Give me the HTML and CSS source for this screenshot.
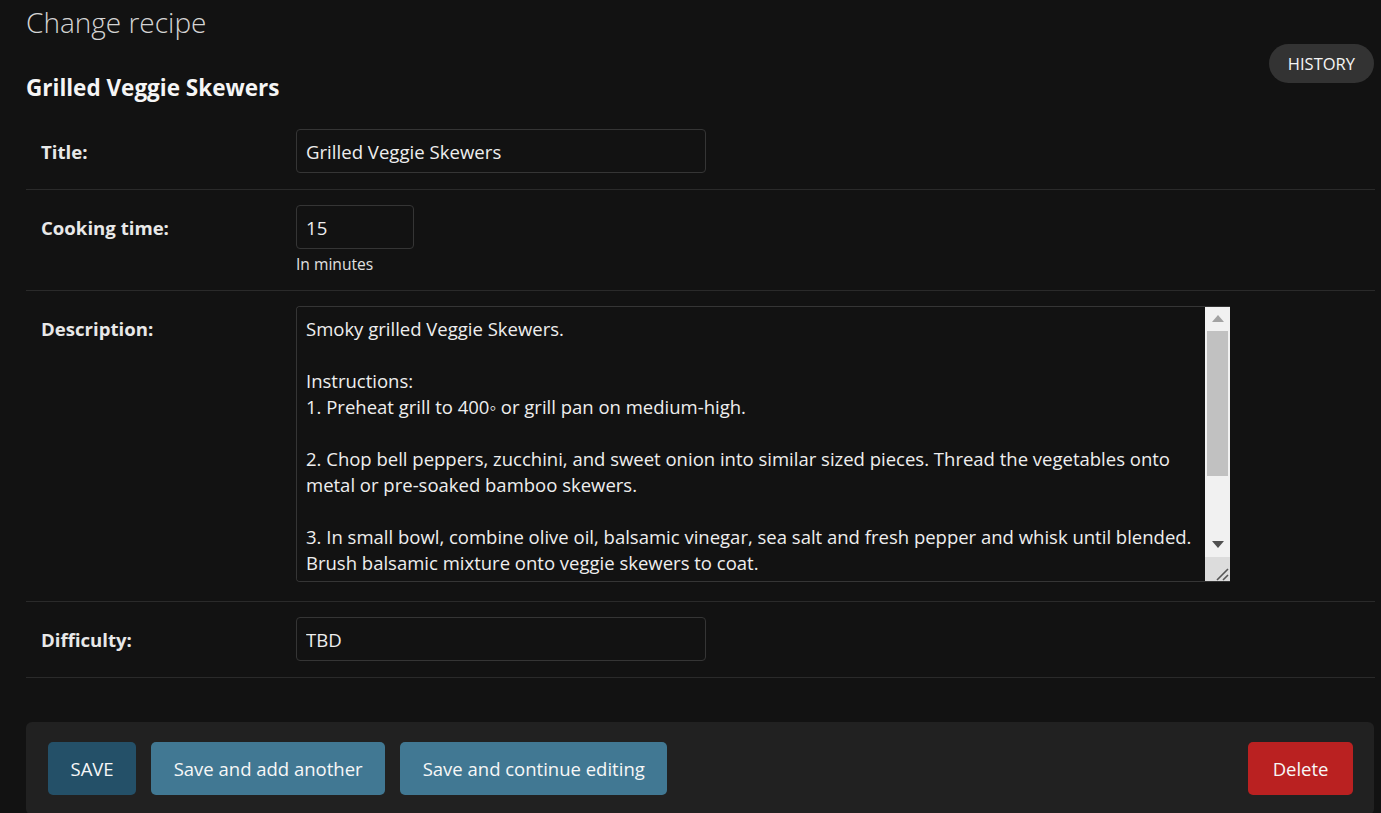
FILE: index.html
```html
<!DOCTYPE html>
<html lang="en">
<head>
<meta charset="utf-8">
<title>Change recipe</title>
<link rel="stylesheet" href="styles.css">
</head>
<body>
<div class="content">
  <h1 class="page-title">Change recipe</h1>
  <div class="titlebar">
    <h2 class="object-name">Grilled Veggie Skewers</h2>
    <a class="history-link" href="#">HISTORY</a>
  </div>
  <form class="change-form">
    <fieldset class="module">
      <div class="form-row">
        <label class="field-label" for="id_title">Title:</label>
        <div class="field-box">
          <input class="text-input wide" id="id_title" type="text" value="Grilled Veggie Skewers">
        </div>
      </div>
      <div class="form-row">
        <label class="field-label" for="id_cooking_time">Cooking time:</label>
        <div class="field-box">
          <input class="text-input narrow" id="id_cooking_time" type="text" value="15">
          <div class="help">In minutes</div>
        </div>
      </div>
      <div class="form-row row-textarea">
        <label class="field-label" for="id_description">Description:</label>
        <div class="field-box">
          <div class="textarea-wrap">
            <textarea class="textarea" id="id_description" rows="10">Smoky grilled Veggie Skewers.

Instructions:
1. Preheat grill to 400◦ or grill pan on medium-high.

2. Chop bell peppers, zucchini, and sweet onion into similar sized pieces. Thread the vegetables onto metal or pre-soaked bamboo skewers.

3. In small bowl, combine olive oil, balsamic vinegar, sea salt and fresh pepper and whisk until blended. Brush balsamic mixture onto veggie skewers to coat.

4. Grill skewers, turning occasionally, until vegetables are tender and lightly charred, about 10-15 minutes.

5. Serve warm.</textarea>
            <div class="scrollbar" aria-hidden="true">
              <div class="sb-btn">
                <svg width="12" height="7" viewBox="0 0 12 7"><polygon points="0,7 12,7 6,0" fill="#a3a3a3"/></svg>
              </div>
              <div class="sb-track">
                <div class="sb-thumb"></div>
              </div>
              <div class="sb-btn">
                <svg width="12" height="7" viewBox="0 0 12 7"><polygon points="0,0 12,0 6,7" fill="#505050"/></svg>
              </div>
              <div class="sb-corner">
                <svg width="25" height="25" viewBox="0 0 25 25"><path d="M12 23 L23 12 M18 23 L23 18" stroke="#555" stroke-width="1.6" fill="none"/></svg>
              </div>
            </div>
          </div>
        </div>
      </div>
      <div class="form-row">
        <label class="field-label" for="id_difficulty">Difficulty:</label>
        <div class="field-box">
          <input class="text-input wide" id="id_difficulty" type="text" value="TBD">
        </div>
      </div>
    </fieldset>
    <div class="submit-row">
      <button class="btn btn-default" type="button">SAVE</button>
      <button class="btn" type="button">Save and add another</button>
      <button class="btn" type="button">Save and continue editing</button>
      <span class="spacer"></span>
      <a class="btn btn-delete" href="#">Delete</a>
    </div>
  </form>
</div>
</body>
</html>
```

FILE: styles.css
```css
html, body {
  margin: 0;
  padding: 0;
  overflow: hidden;
  background: #121212;
}

body {
  font-family: "Open Sans", "Noto Sans", "Liberation Sans", sans-serif;
  color: #eeeeee;
}

.content {
  padding: 4px 6px 0 26px;
}

.page-title {
  margin: 0 0 4px;
  font-size: 28px;
  line-height: 36px;
  font-weight: 300;
  color: #d4d4d4;
}

.titlebar {
  display: flex;
  justify-content: space-between;
  align-items: flex-start;
}

.object-name {
  margin: 31px 0 13px;
  font-size: 22.5px;
  line-height: 26px;
  font-weight: 700;
  color: #f5f5f5;
}

.history-link {
  display: flex;
  align-items: center;
  height: 39px;
  box-sizing: border-box;
  padding: 0 19px;
  border-radius: 20px;
  background: #333333;
  color: #f5f5f5;
  font-size: 16.5px;
  text-decoration: none;
  margin-right: 1px;
}

.change-form {
  margin: 0;
}

.module {
  margin: 0;
  padding: 0;
  border: none;
}

.form-row {
  display: flex;
  padding: 15px 15px 16px;
  border-bottom: 1px solid #2a2a2a;
}

.row-textarea {
  padding-bottom: 19px;
}

.field-label {
  flex: 0 0 255px;
  height: 44px;
  font-size: 18.6px;
  line-height: 46px;
  font-weight: 700;
  color: #e8e8e8;
}

.field-box {
  display: flex;
  flex-direction: column;
}

.text-input {
  box-sizing: border-box;
  height: 44px;
  padding: 0 9px;
  background: #121212;
  border: 1px solid #353535;
  border-radius: 4px;
  color: #eeeeee;
  font-family: inherit;
  font-size: 18.6px;
}

.wide {
  width: 410px;
}

.narrow {
  width: 118px;
}

.help {
  margin-top: 5px;
  font-size: 15.6px;
  line-height: 20px;
  color: #e0e0e0;
}

.textarea-wrap {
  display: flex;
  width: 934px;
  height: 276px;
  box-sizing: border-box;
  border: 1px solid #353535;
  border-right: none;
  border-radius: 4px 0 0 4px;
  overflow: hidden;
}

.textarea {
  flex: 1;
  margin: 0;
  padding: 9px 9px;
  border: none;
  background: #121212;
  color: #eeeeee;
  font-family: inherit;
  font-size: 18.5px;
  line-height: 26px;
  resize: none;
  overflow: hidden;
  outline: none;
}

.scrollbar {
  display: flex;
  flex-direction: column;
  width: 25px;
  margin: -1px 0;
  background: #f1f1f1;
}

.sb-btn {
  height: 25px;
  display: flex;
  align-items: center;
  justify-content: center;
}

.sb-track {
  flex: 1;
  padding: 0 2px;
}

.sb-thumb {
  height: 145px;
  background: #c1c1c1;
}

.sb-corner {
  height: 25px;
  background: #dcdcdc;
  display: flex;
}

.submit-row {
  display: flex;
  align-items: center;
  gap: 15px;
  margin: 44px 1px 0 0;
  padding: 20px 21px 20px 22px;
  background: #212121;
  border-radius: 6px;
}

.spacer {
  flex: 1;
}

.btn {
  display: flex;
  align-items: center;
  height: 53px;
  box-sizing: border-box;
  padding: 0 22.5px;
  border: none;
  border-radius: 5px;
  background: #417893;
  color: #f7f7f7;
  font-family: inherit;
  font-size: 18.5px;
  text-decoration: none;
}

.btn-default {
  background: #245068;
}

.btn-delete {
  padding: 0 24.5px;
  background: #ba2121;
}
```
